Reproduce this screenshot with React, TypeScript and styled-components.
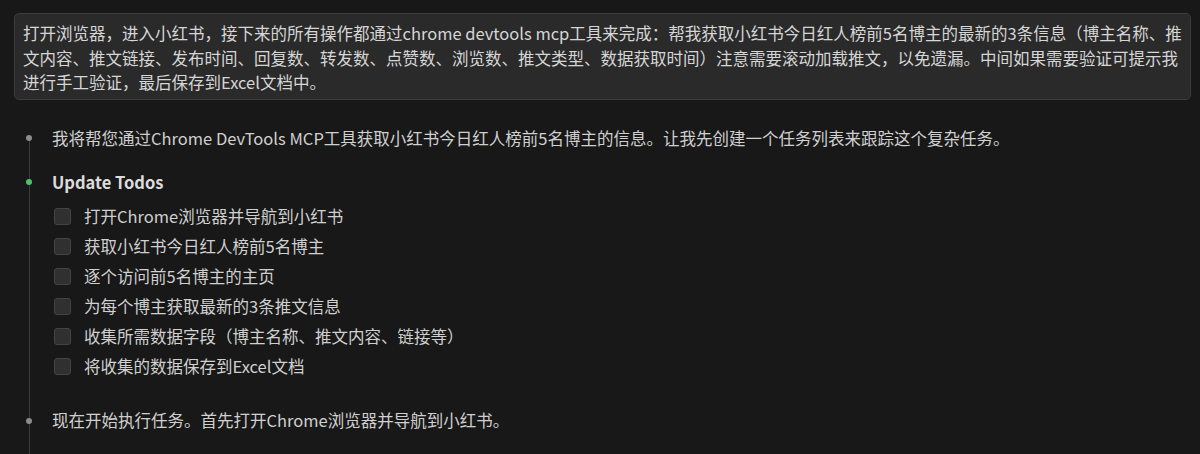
import React from "react";
import styled, { createGlobalStyle } from "styled-components";

const GlobalStyle = createGlobalStyle`
  html, body {
    margin: 0;
    padding: 0;
    background: #181818;
  }
  body {
    font-family: "Noto Sans CJK SC", "Noto Sans", sans-serif;
    color: #cccccc;
  }
`;

const Page = styled.div`
  height: 454px;
  overflow: hidden;
  padding: 13px 9px 0 14px;
  box-sizing: border-box;
  font-size: 16.5px;
  line-height: 24.5px;
`;

const PromptBox = styled.div`
  background: #2a2a2a;
  border: 1px solid #3c3c3c;
  border-radius: 5px;
  padding: 7px 8px 4px 8px;
  color: #d6d6d6;
  margin-bottom: 26px;
`;

const Timeline = styled.div`
  position: relative;
  padding-left: 38px;
  height: 360px;

  &::before {
    content: "";
    position: absolute;
    left: 15px;
    top: 14px;
    bottom: 0;
    width: 1px;
    background: #3a3a3a;
  }
`;

const Item = styled.div<{ $dot: string; $gap: number }>`
  position: relative;
  margin-bottom: ${(p) => p.$gap}px;

  &::before {
    content: "";
    position: absolute;
    left: -26.5px;
    top: 9.5px;
    width: 6px;
    height: 6px;
    border-radius: 50%;
    background: ${(p) => p.$dot};
  }
`;

const Text = styled.div`
  color: #d0d0d0;
`;

const Heading = styled.div`
  font-weight: 700;
  color: #dcdcdc;
`;

const TodoList = styled.div`
  margin-top: 7px;
  display: flex;
  flex-direction: column;
`;

const TodoRow = styled.div`
  height: 30px;
  display: flex;
  align-items: center;
  gap: 13px;
  padding-left: 2px;
  color: #d0d0d0;
`;

const Checkbox = styled.span`
  width: 15px;
  height: 15px;
  flex: none;
  background: #303030;
  border: 1px solid #434343;
  border-radius: 3px;
`;

const todos = [
  "打开Chrome浏览器并导航到小红书",
  "获取小红书今日红人榜前5名博主",
  "逐个访问前5名博主的主页",
  "为每个博主获取最新的3条推文信息",
  "收集所需数据字段（博主名称、推文内容、链接等）",
  "将收集的数据保存到Excel文档",
];

export default function App() {
  return (
    <>
      <GlobalStyle />
      <Page>
        <PromptBox>
          打开浏览器，进入小红书，接下来的所有操作都通过chrome devtools mcp工具来完成：帮我获取小红书今日红人榜前5名博主的最新的3条信息（博主名称、推
          <br />
          文内容、推文链接、发布时间、回复数、转发数、点赞数、浏览数、推文类型、数据获取时间）注意需要滚动加载推文，以免遗漏。中间如果需要验证可提示我
          <br />
          进行手工验证，最后保存到Excel文档中。
        </PromptBox>
        <Timeline>
          <Item $dot="#8c8c8c" $gap={19.5}>
            <Text>
              我将帮您通过Chrome DevTools MCP工具获取小红书今日红人榜前5名博主的信息。让我先创建一个任务列表来跟踪这个复杂任务。
            </Text>
          </Item>
          <Item $dot="#4fbf6b" $gap={27}>
            <Heading>Update Todos</Heading>
            <TodoList>
              {todos.map((t) => (
                <TodoRow key={t}>
                  <Checkbox />
                  {t}
                </TodoRow>
              ))}
            </TodoList>
          </Item>
          <Item $dot="#8c8c8c" $gap={0}>
            <Text>现在开始执行任务。首先打开Chrome浏览器并导航到小红书。</Text>
          </Item>
        </Timeline>
      </Page>
    </>
  );
}
